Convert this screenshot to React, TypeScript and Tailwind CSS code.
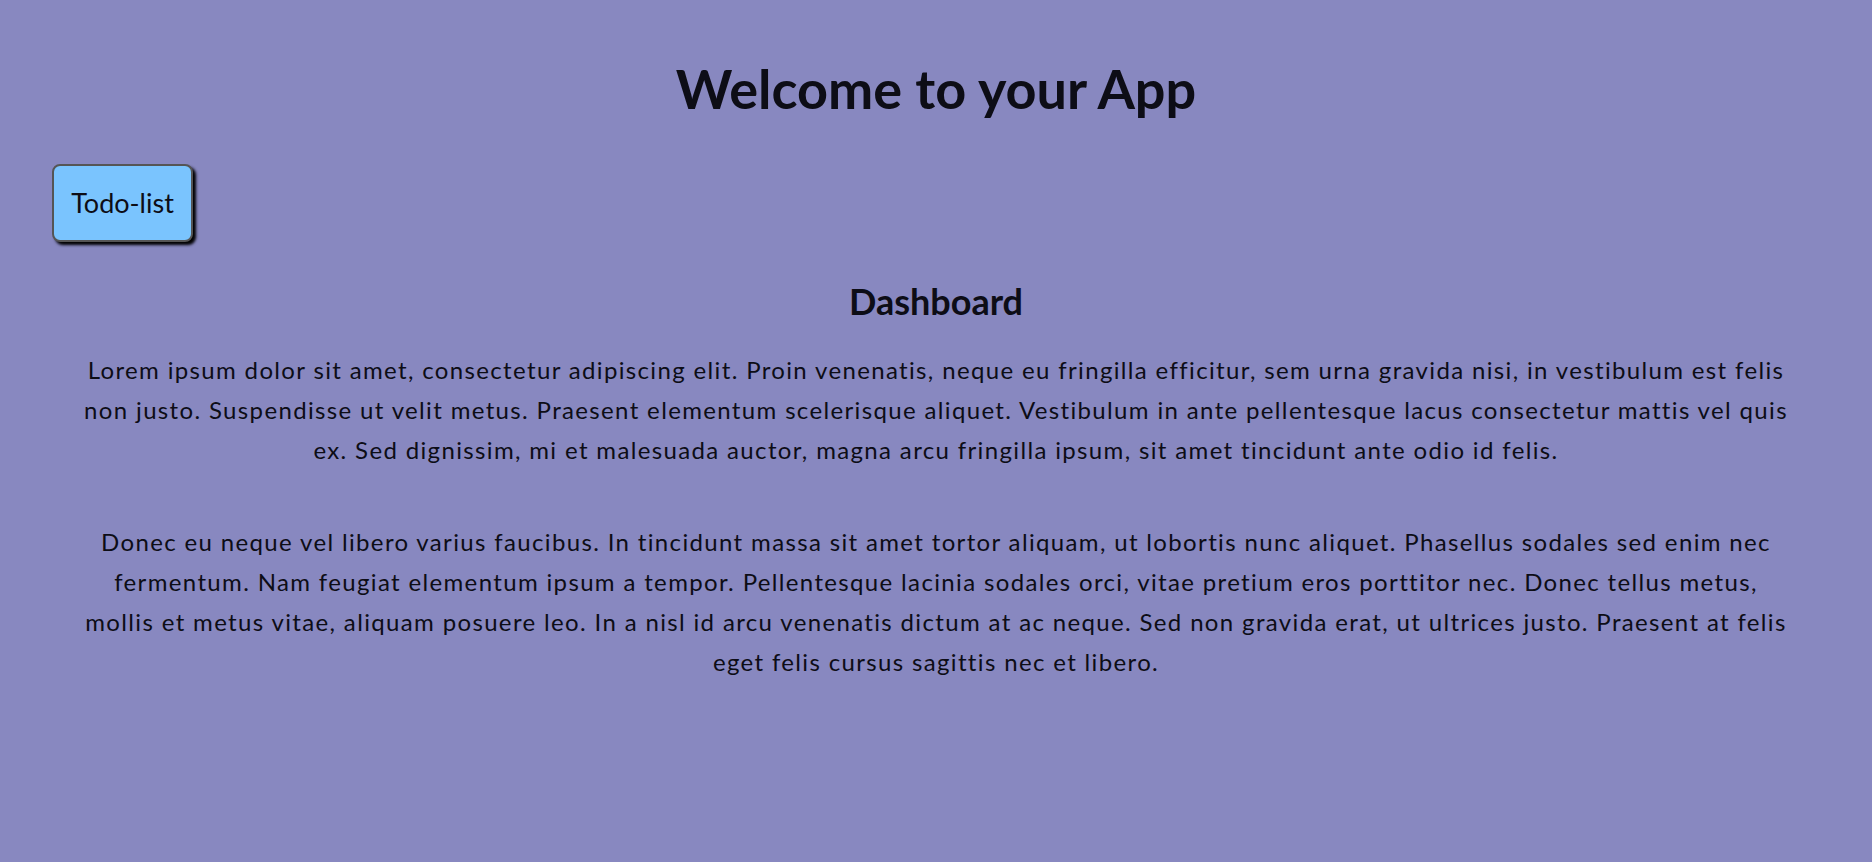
export default function App() {
  return (
    <main className="min-h-screen bg-[#8888c0] font-['Lato',sans-serif] text-[#0d0d16]">
      <h1 className="pt-[59px] text-center text-[54px] font-bold leading-[60px]">
        Welcome to your App
      </h1>

      <div className="mt-[45px] pl-[52px]">
        <button className="h-[78px] w-[141px] rounded-lg border-2 border-[#555555] bg-[#7ac4fe] text-[27px] shadow-[3px_3px_3px_#000]">
          Todo-list
        </button>
      </div>

      <section className="px-[80px] text-center">
        <h2 className="mt-[38px] text-[36px] font-bold leading-[42px]">Dashboard</h2>
        <p className="mt-[28px] text-[24px] leading-[40px] tracking-[1.35px]">
          Lorem ipsum dolor sit amet, consectetur adipiscing elit. Proin venenatis, neque eu
          fringilla efficitur, sem urna gravida nisi, in vestibulum est felis non justo.
          Suspendisse ut velit metus. Praesent elementum scelerisque aliquet. Vestibulum in ante
          pellentesque lacus consectetur mattis vel quis ex. Sed dignissim, mi et malesuada
          auctor, magna arcu fringilla ipsum, sit amet tincidunt ante odio id felis.
        </p>
        <p className="mt-[52px] text-[24px] leading-[40px] tracking-[1.35px]">
          Donec eu neque vel libero varius faucibus. In tincidunt massa sit amet tortor aliquam,
          ut lobortis nunc aliquet. Phasellus sodales sed enim nec fermentum. Nam feugiat
          elementum ipsum a tempor. Pellentesque lacinia sodales orci, vitae pretium eros
          porttitor nec. Donec tellus metus, mollis et metus vitae, aliquam posuere leo. In a
          nisl id arcu venenatis dictum at ac neque. Sed non gravida erat, ut ultrices justo.
          Praesent at felis eget felis cursus sagittis nec et libero.
        </p>
      </section>
    </main>
  );
}
